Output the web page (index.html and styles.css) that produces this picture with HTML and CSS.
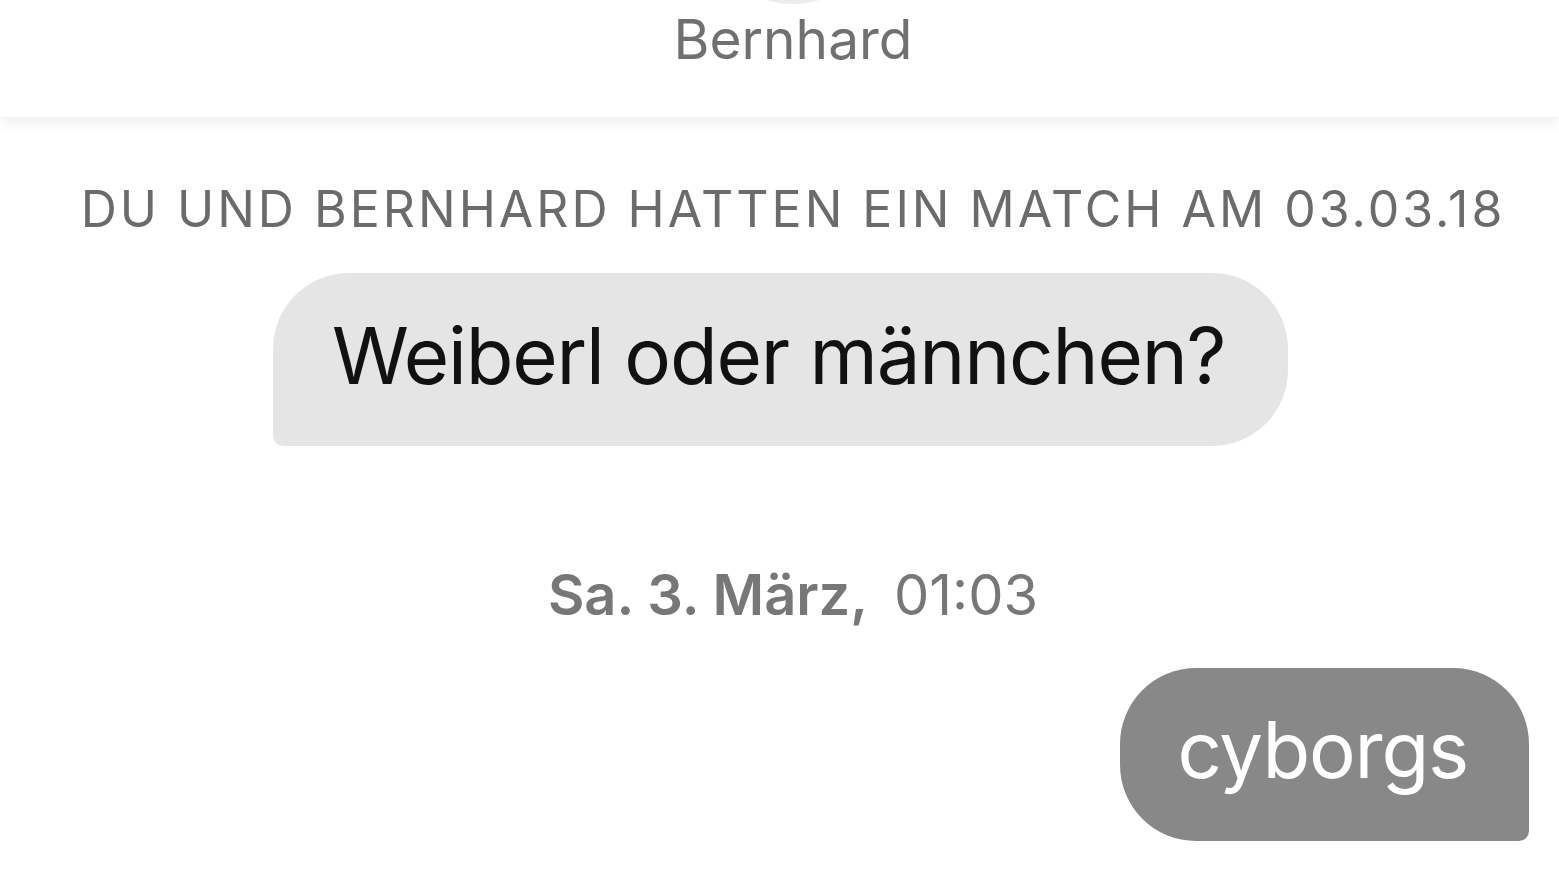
FILE: index.html
```html
<!DOCTYPE html>
<html>
<head>
	<meta charset="utf-8">
	<title>Bernhard</title>
	<link rel="stylesheet" href="styles.css">
</head>
<body>
	<div class="header">
		<div class="avatar"></div>
		<div class="name">Bernhard</div>
	</div>
	<div class="chat">
		<div class="match">DU UND BERNHARD HATTEN EIN MATCH AM 03.03.18</div>
		<div class="bubble in">Weiberl oder männchen?</div>
		<div class="time"><b>Sa. 3. März,</b> 01:03</div>
		<div class="bubble out">cyborgs</div>
	</div>
</body>
</html>
```

FILE: styles.css
```css
body,div{margin:0;padding:0;}
body{background:#fff;font-family:Inter,"Liberation Sans",sans-serif;overflow:hidden;height:876px;}
.header{height:117px;background:#fff;display:flex;flex-direction:column;align-items:center;padding-left:27px;box-shadow:0 4px 14px rgba(0,0,0,0.08);position:relative;overflow:hidden;}
.avatar{width:180px;height:180px;border-radius:50%;background:#ececec;margin-top:-176px;flex-shrink:0;}
.name{font-size:55px;color:#707070;line-height:1;margin-top:8px;}
.chat{display:flex;flex-direction:column;padding-left:27px;}
.match{font-size:50px;color:#6b6b6b;text-align:center;letter-spacing:3px;line-height:1;margin-top:67px;}
.bubble{font-size:78px;letter-spacing:-1.2px;line-height:1;height:173px;box-sizing:border-box;display:flex;align-items:center;}
.in{align-self:flex-start;margin-left:246px;margin-top:39px;background:#e5e5e5;color:#111;padding:0 63px 8px 59px;border-radius:76px 76px 76px 10px;}
.out{align-self:flex-end;margin-top:45px;margin-right:30px;background:#888;color:#fff;padding:0 61px 10px 58px;border-radius:76px 76px 10px 76px;}
.time{font-size:56px;color:#777;text-align:center;line-height:1;margin-top:121px;}
.time b{font-weight:600;margin-right:10px;}
```
